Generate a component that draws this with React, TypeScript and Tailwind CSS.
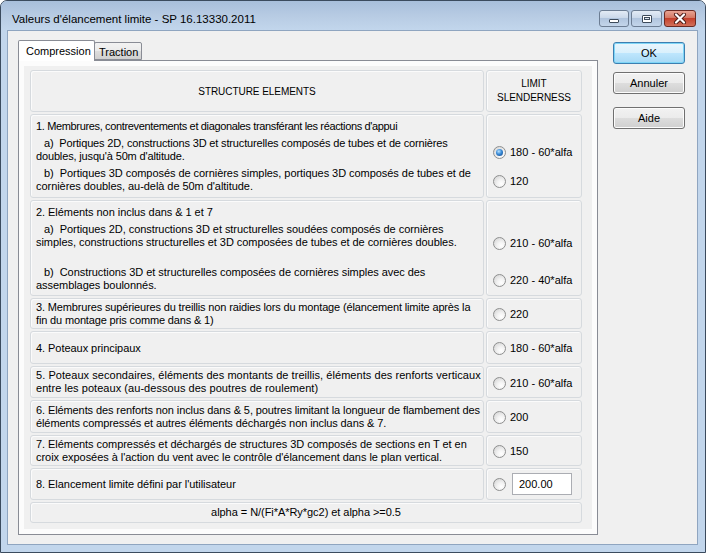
import React from 'react';

const Radio: React.FC<{ checked?: boolean }> = ({ checked }) => (
  <span className="w-[13px] h-[13px] rounded-full border border-[#8e8f8f] bg-[radial-gradient(circle_at_65%_70%,#ffffff_0%,#f3f3f3_35%,#cfcfcf_100%)] flex items-center justify-center shrink-0">
    {checked && (
      <span className="w-[7px] h-[7px] rounded-full bg-[radial-gradient(circle_at_40%_35%,#b8e3ff_0%,#3a8ad6_45%,#0d3f80_100%)]" />
    )}
  </span>
);

const Opt: React.FC<{ label?: string; checked?: boolean; children?: React.ReactNode }> = ({ label, checked, children }) => (
  <div className="flex items-center h-[13px] text-[11px] tracking-normal">
    <Radio checked={checked} />
    {label && <span className="ml-[4px] whitespace-nowrap">{label}</span>}
    {children}
  </div>
);

const cell = 'rounded-[3px] border border-[#d6dade] bg-[#f0f0f0] shadow-[inset_1px_1px_0_#fbfbfb]';

const Row: React.FC<{ h: string; left: React.ReactNode; right: React.ReactNode; leftCls?: string; rightCls?: string }> = ({ h, left, right, leftCls = '', rightCls = '' }) => (
  <div className={`flex gap-[2px] ${h}`}>
    <div className={`${cell} w-[454px] pl-[5px] whitespace-nowrap ${leftCls}`}>{left}</div>
    <div className={`${cell} w-[96px] pl-[6px] ${rightCls}`}>{right}</div>
  </div>
);

const WinButton: React.FC<{ label: string; primary?: boolean; cls?: string }> = ({ label, primary, cls = '' }) => (
  <button
    className={`w-[72px] h-[22px] rounded-[3px] border text-[11px] text-black flex items-center justify-center ${cls} ${
      primary
        ? 'border-[#3c7fb1] bg-[linear-gradient(180deg,#eaf6fd_0%,#d9f0fc_50%,#bee6fd_51%,#a7d9f5_100%)] shadow-[inset_0_0_0_1px_#7fd6f7]'
        : 'border-[#707070] bg-[linear-gradient(180deg,#f2f2f2_0%,#ebebeb_50%,#dddddd_51%,#cfcfcf_100%)] shadow-[inset_0_0_0_1px_#fcfcfc]'
    }`}
  >
    {label}
  </button>
);

export default function App() {
  return (
    <div className="w-[706px] h-[553px] flex flex-col rounded-t-[7px] border border-[#3b4b5e] bg-[#c2d6ec] font-['Liberation_Sans',Arial,sans-serif] text-black overflow-hidden">
      {/* Caption */}
      <div className="h-[29px] flex items-start justify-between bg-[linear-gradient(180deg,#a8bfdb_0%,#b7cbe3_50%,#c2d6ec_100%)]">
        <span className="pl-[11px] pt-[10px] text-[11.5px] leading-[16px] text-black">Valeurs d'élancement limite - SP 16.13330.2011</span>
        <div className="flex gap-[2px] pt-[9px] pr-[9px]">
          <div className="w-[30px] h-[17px] rounded-[3px] border border-[#6c7d93] bg-[linear-gradient(180deg,#e3ebf5_0%,#cbd9ea_45%,#b1c5de_50%,#c3d5ea_100%)] flex items-end justify-center pb-[3px]">
            <span className="w-[10px] h-[4px] border border-[#3c4a5a] bg-white rounded-[1px]" />
          </div>
          <div className="w-[31px] h-[17px] rounded-[3px] border border-[#6c7d93] bg-[linear-gradient(180deg,#e3ebf5_0%,#cbd9ea_45%,#b1c5de_50%,#c3d5ea_100%)] flex items-center justify-center">
            <span className="w-[10px] h-[8px] border border-[#3c4a5a] bg-white rounded-[1px] flex items-center justify-center">
              <span className="w-[6px] h-[3px] border border-[#3c4a5a] bg-[#dfe7f1]" />
            </span>
          </div>
          <div className="w-[32px] h-[17px] rounded-[3px] border border-[#6b2a22] bg-[linear-gradient(180deg,#e8a493_0%,#d47864_45%,#c4412c_50%,#d2705a_100%)] flex items-center justify-center">
            <svg width="14" height="11" viewBox="0 0 14 11">
              <path d="M3 1.5 L11 9.5 M11 1.5 L3 9.5" stroke="#4b1a14" strokeWidth="4" strokeLinecap="round" />
              <path d="M3 1.5 L11 9.5 M11 1.5 L3 9.5" stroke="#ffffff" strokeWidth="2.2" strokeLinecap="round" />
            </svg>
          </div>
        </div>
      </div>

      <div className="flex flex-1">
        {/* Client area */}
        <div className="ml-[6px] mr-[7px] flex-1 flex bg-[#f0f0f0] border border-[#8fa5c0] pl-[10px] pr-[11px] pt-[9px] text-[11px] tracking-[-0.05px] leading-[13px]">
          {/* Tabs */}
          <div className="w-[580px] flex flex-col">
            <div className="h-[20px] flex items-end text-[11px] tracking-normal">
              <div className="w-[77px] h-[21px] -mb-px relative z-10 border border-b-0 border-[#898c95] bg-white rounded-t-[2px] pl-[7px] pt-[3px] leading-[14px]">
                Compression
              </div>
              <div className="w-[48px] h-[18px] -ml-px border border-[#898c95] bg-[linear-gradient(180deg,#f2f2f2_0%,#ebebeb_50%,#dddddd_51%,#cfcfcf_100%)] rounded-t-[2px] pl-[4px] pt-[2px] leading-[14px]">
                Traction
              </div>
            </div>
            <div className="h-[475px] border border-[#898c95] bg-[#fcfcfc] p-[5px]">
              <div className="h-full bg-[#f0f0f0] pl-[6px] pr-[10px] pt-[4px] flex flex-col gap-[2px]">
                <Row
                  h="h-[42px]"
                  leftCls="flex items-center justify-center !pl-0 text-[10px]"
                  rightCls="flex items-center justify-center !pl-0 text-[10px]"
                  left={<span>STRUCTURE ELEMENTS</span>}
                  right={<span className="text-center leading-[14px]">LIMIT<br />SLENDERNESS</span>}
                />
                <Row
                  h="h-[84px]"
                  leftCls="pt-[5px]"
                  rightCls="pt-[31px]"
                  left={
                    <>
                      <p className="tracking-[-0.35px]">1. Membrures, contreventements et diagonales transférant les réactions d'appui</p>
                      <p className="mt-[4px] indent-[8px] tracking-[-0.15px]">a)&nbsp; Portiques 2D, constructions 3D et structurelles composés de tubes et de cornières<br />doubles, jusqu'à 50m d'altitude.</p>
                      <p className="mt-[4px] indent-[8px]">b)&nbsp; Portiques 3D composés de cornières simples, portiques 3D composés de tubes et de<br />cornières doubles, au-delà de 50m d'altitude.</p>
                    </>
                  }
                  right={
                    <>
                      <Opt checked label="180 - 60*alfa" />
                      <div className="h-[16px]" />
                      <Opt label="120" />
                    </>
                  }
                />
                <Row
                  h="h-[96px]"
                  leftCls="pt-[5px]"
                  rightCls="pt-[36px]"
                  left={
                    <>
                      <p>2. Eléments non inclus dans &amp; 1 et 7</p>
                      <p className="mt-[4px] indent-[8px]">a)&nbsp; Portiques 2D, constructions 3D et structurelles soudées composés de cornières<br />simples, constructions structurelles et 3D composées de tubes et de cornières doubles.</p>
                      <p className="mt-[17px] indent-[8px]">b)&nbsp; Constructions 3D et structurelles composées de cornières simples avec des<br />assemblages boulonnés.</p>
                    </>
                  }
                  right={
                    <>
                      <Opt label="210 - 60*alfa" />
                      <div className="h-[24px]" />
                      <Opt label="220 - 40*alfa" />
                    </>
                  }
                />
                <Row
                  h="h-[31px]"
                  leftCls="flex items-center tracking-[-0.15px]"
                  rightCls="flex items-center pt-[2px]"
                  left={<p>3. Membrures supérieures du treillis non raidies lors du montage (élancement limite après la<br />fin du montage pris comme dans &amp; 1)</p>}
                  right={<Opt label="220" />}
                />
                <Row
                  h="h-[33px]"
                  leftCls="flex items-center pt-[2px]"
                  rightCls="flex items-center pt-[2px]"
                  left={<p>4. Poteaux principaux</p>}
                  right={<Opt label="180 - 60*alfa" />}
                />
                <Row
                  h="h-[32px]"
                  leftCls="flex items-center tracking-[0.05px]"
                  rightCls="flex items-center pt-[2px]"
                  left={<p>5. Poteaux secondaires, éléments des montants de treillis, éléments des renforts verticaux<br />entre les poteaux (au-dessous des poutres de roulement)</p>}
                  right={<Opt label="210 - 60*alfa" />}
                />
                <Row
                  h="h-[33px]"
                  leftCls="flex items-center tracking-[-0.1px]"
                  rightCls="flex items-center pt-[2px]"
                  left={<p>6. Eléments des renforts non inclus dans &amp; 5, poutres limitant la longueur de flambement des<br />éléments compressés et autres éléments déchargés non inclus dans &amp; 7.</p>}
                  right={<Opt label="200" />}
                />
                <Row
                  h="h-[31px]"
                  leftCls="flex items-center"
                  rightCls="flex items-center pt-[2px]"
                  left={<p>7. Eléments compressés et déchargés de structures 3D composés de sections en T et en<br />croix exposées à l'action du vent avec le contrôle d'élancement dans le plan vertical.</p>}
                  right={<Opt label="150" />}
                />
                <Row
                  h="h-[32px]"
                  leftCls="flex items-center"
                  rightCls="flex items-center"
                  left={<p>8. Elancement limite défini par l'utilisateur</p>}
                  right={
                    <Opt>
                      <span className="ml-[6px] w-[60px] h-[22px] border border-[#abadb3] bg-white pl-[6px] flex items-center text-[11px]">200.00</span>
                    </Opt>
                  }
                />
                <div className={`${cell} h-[21px] flex items-center justify-center`}>
                  alpha = N/(Fi*A*Ry*gc2) et alpha &gt;=0.5
                </div>
              </div>
            </div>
          </div>

          {/* Buttons */}
          <div className="ml-[15px] flex flex-col pt-[2px] tracking-normal">
            <WinButton label="OK" primary />
            <WinButton label="Annuler" cls="mt-[8px]" />
            <WinButton label="Aide" cls="mt-[13px]" />
          </div>
        </div>
      </div>
      <div className="h-[7px]" />
    </div>
  );
}
